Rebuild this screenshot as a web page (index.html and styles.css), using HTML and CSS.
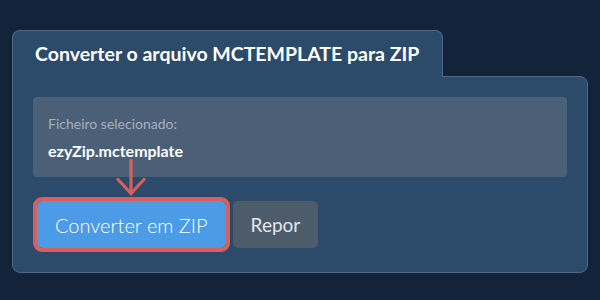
FILE: index.html
```html
<!doctype html>
<html lang="pt">
<head>
  <meta charset="utf-8" />
  <meta name="viewport" content="width=device-width,initial-scale=1" />
  <title>Converter MCTEMPLATE para ZIP</title>
  <link rel="stylesheet" href="styles.css">
</head>
<body>
  <section class="converter">
    <h2 class="tab">Converter o arquivo MCTEMPLATE para ZIP</h2>

    <div class="panel">
      <div class="file-box">
        <div class="file-label">Ficheiro selecionado:</div>
        <div class="file-name">ezyZip.mctemplate</div>
      </div>

      <div class="actions">
        <div class="convert-wrap">
          <svg class="hint-arrow" width="30" height="38" viewBox="0 0 30 38" aria-hidden="true">
            <path d="M15 1.5 V35 M2 20.5 L15 34.5 L28 20.5" fill="none" stroke="#d9605a" stroke-width="3.2" stroke-linecap="round" stroke-linejoin="round"/>
          </svg>
          <button type="button" class="btn btn-convert">Converter em ZIP</button>
        </div>
        <button type="button" class="btn btn-reset">Repor</button>
      </div>
    </div>
  </section>
</body>
</html>
```

FILE: styles.css
```css
:root{
  --bg:#12233a;
  --panel:#2c4a6a;
  --edge:#4f6886;
  --box:#4b5f77;
  --primary:#4b9be6;
  --accent:#d9605a;
  --muted:#4d5c6b;
}
html,body{margin:0;height:100%;}
body{background:var(--bg);font-family:Lato,"Open Sans",Arial,sans-serif;color:#fff;padding:30px 12px 0;box-sizing:border-box;}

.converter{display:flex;flex-direction:column;align-items:flex-start;width:576px}
.tab{
  position:relative;z-index:1;margin:0 0 -1px;
  background:var(--panel);border:1px solid var(--edge);border-bottom:0;border-radius:8px 8px 0 0;
  padding:12px 23px 13px 22px;font-size:19.5px;font-weight:700;line-height:21px;color:#fff;
}
.panel{
  align-self:stretch;background:var(--panel);border:1px solid var(--edge);border-radius:0 8px 8px 8px;
  padding:20px 20px 24px;
}

.file-box{background:var(--box);border-radius:4px;padding:18px 15px 17px;}
.file-label{font-size:14px;line-height:17px;color:#a6b0bd;}
.file-name{margin-top:9px;font-size:16px;font-weight:700;line-height:19px;color:#fff;}

.actions{display:flex;gap:7px;margin-top:24px;}
.convert-wrap{position:relative;margin-left:4px;}
.hint-arrow{position:absolute;left:50%;top:-42px;margin-left:-15px;}
.btn{
  height:47px;border:0;border-radius:5px;font-family:inherit;font-size:20px;font-weight:300;cursor:pointer;
}
.btn-convert{background:var(--primary);color:#fff;padding:0 18px;outline:4px solid var(--accent);}
.btn-reset{background:var(--muted);color:#e3e6ea;padding:0 18px;font-weight:400;font-size:19px;}
```
